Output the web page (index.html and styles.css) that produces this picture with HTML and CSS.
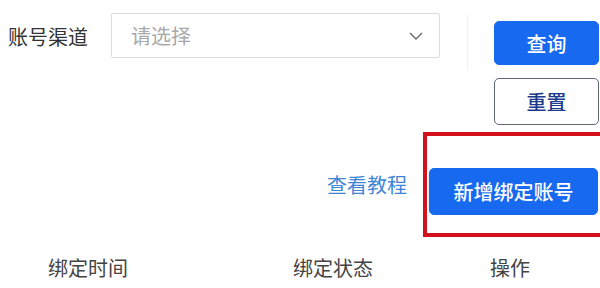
FILE: index.html
```html
<!DOCTYPE html>
<html lang="zh-CN">
<head>
<meta charset="utf-8">
<link rel="stylesheet" href="styles.css">
</head>
<body>
<div class="page">
  <div class="filter">
    <label class="label">账号渠道</label>
    <div class="select">
      <span class="placeholder">请选择</span>
      <svg class="chev" width="14" height="8" viewBox="0 0 14 8"><path d="M1 1 L7 7 L13 1" fill="none" stroke="#666" stroke-width="1.4"/></svg>
    </div>
    <div class="divider"></div>
    <div class="actions">
      <button class="btn btn-primary">查询</button>
      <button class="btn btn-outline">重置</button>
    </div>
  </div>
  <div class="toolbar">
    <a class="link">查看教程</a>
    <div class="highlight">
      <button class="btn btn-primary btn-add">新增绑定账号</button>
    </div>
  </div>
  <div class="thead">
    <span>绑定时间</span>
    <span>绑定状态</span>
    <span>操作</span>
  </div>
</div>
</body>
</html>
```
FILE: styles.css
```css
* { box-sizing: border-box; }
html, body { margin: 0; padding: 0; background: #fff; }
body {
  font-family: "Noto Sans CJK SC", "Noto Sans", sans-serif;
  font-size: 20px;
  color: #333;
  width: 600px;
  height: 288px;
  overflow: hidden;
}
.page { width: 600px; }
.filter {
  display: flex;
  align-items: flex-start;
  padding-top: 13px;
  height: 125px;
}
.label {
  margin-left: 8px;
  width: 103px;
  line-height: 47px;
  color: #333;
}
.select {
  width: 329px;
  height: 45px;
  border: 1px solid #dcdcdc;
  border-radius: 2px;
  display: flex;
  align-items: center;
  justify-content: space-between;
  padding: 0 16px 0 19px;
}
.placeholder { color: #a8a8a8; }
.chev { margin-top: 1px; }
.divider {
  width: 1px;
  height: 55px;
  background: #efefef;
  margin: 2px 26px 0 27px;
}
.actions {
  display: flex;
  flex-direction: column;
  gap: 13px;
  margin-top: 8px;
}
.btn {
  font-family: inherit;
  font-size: 20px;
  font-weight: 500;
  border-radius: 5px;
  cursor: pointer;
  padding: 0;
}
.btn-primary {
  background: #1769f0;
  border: 1px solid #1769f0;
  color: #fff;
}
.actions .btn { width: 105px; }
.actions .btn-primary { height: 44px; }
.btn-outline {
  height: 47px;
  background: #fff;
  border: 1px solid #5d6775;
  color: #1c3a8c;
}
.toolbar {
  display: flex;
  align-items: center;
  justify-content: flex-end;
  margin-top: 7px;
  margin-right: -6px;
}
.link {
  color: #3f86d6;
  margin-right: 16px;
}
.highlight {
  border: 4px solid #d4101a;
  padding: 32px 4px 18px 2px;
}
.btn-add {
  width: 169px;
  height: 47px;
}
.thead {
  display: grid;
  grid-template-columns: 245px 197px auto;
  padding-left: 48px;
  margin-top: 18px;
  color: #444;
  line-height: 26px;
}
```
